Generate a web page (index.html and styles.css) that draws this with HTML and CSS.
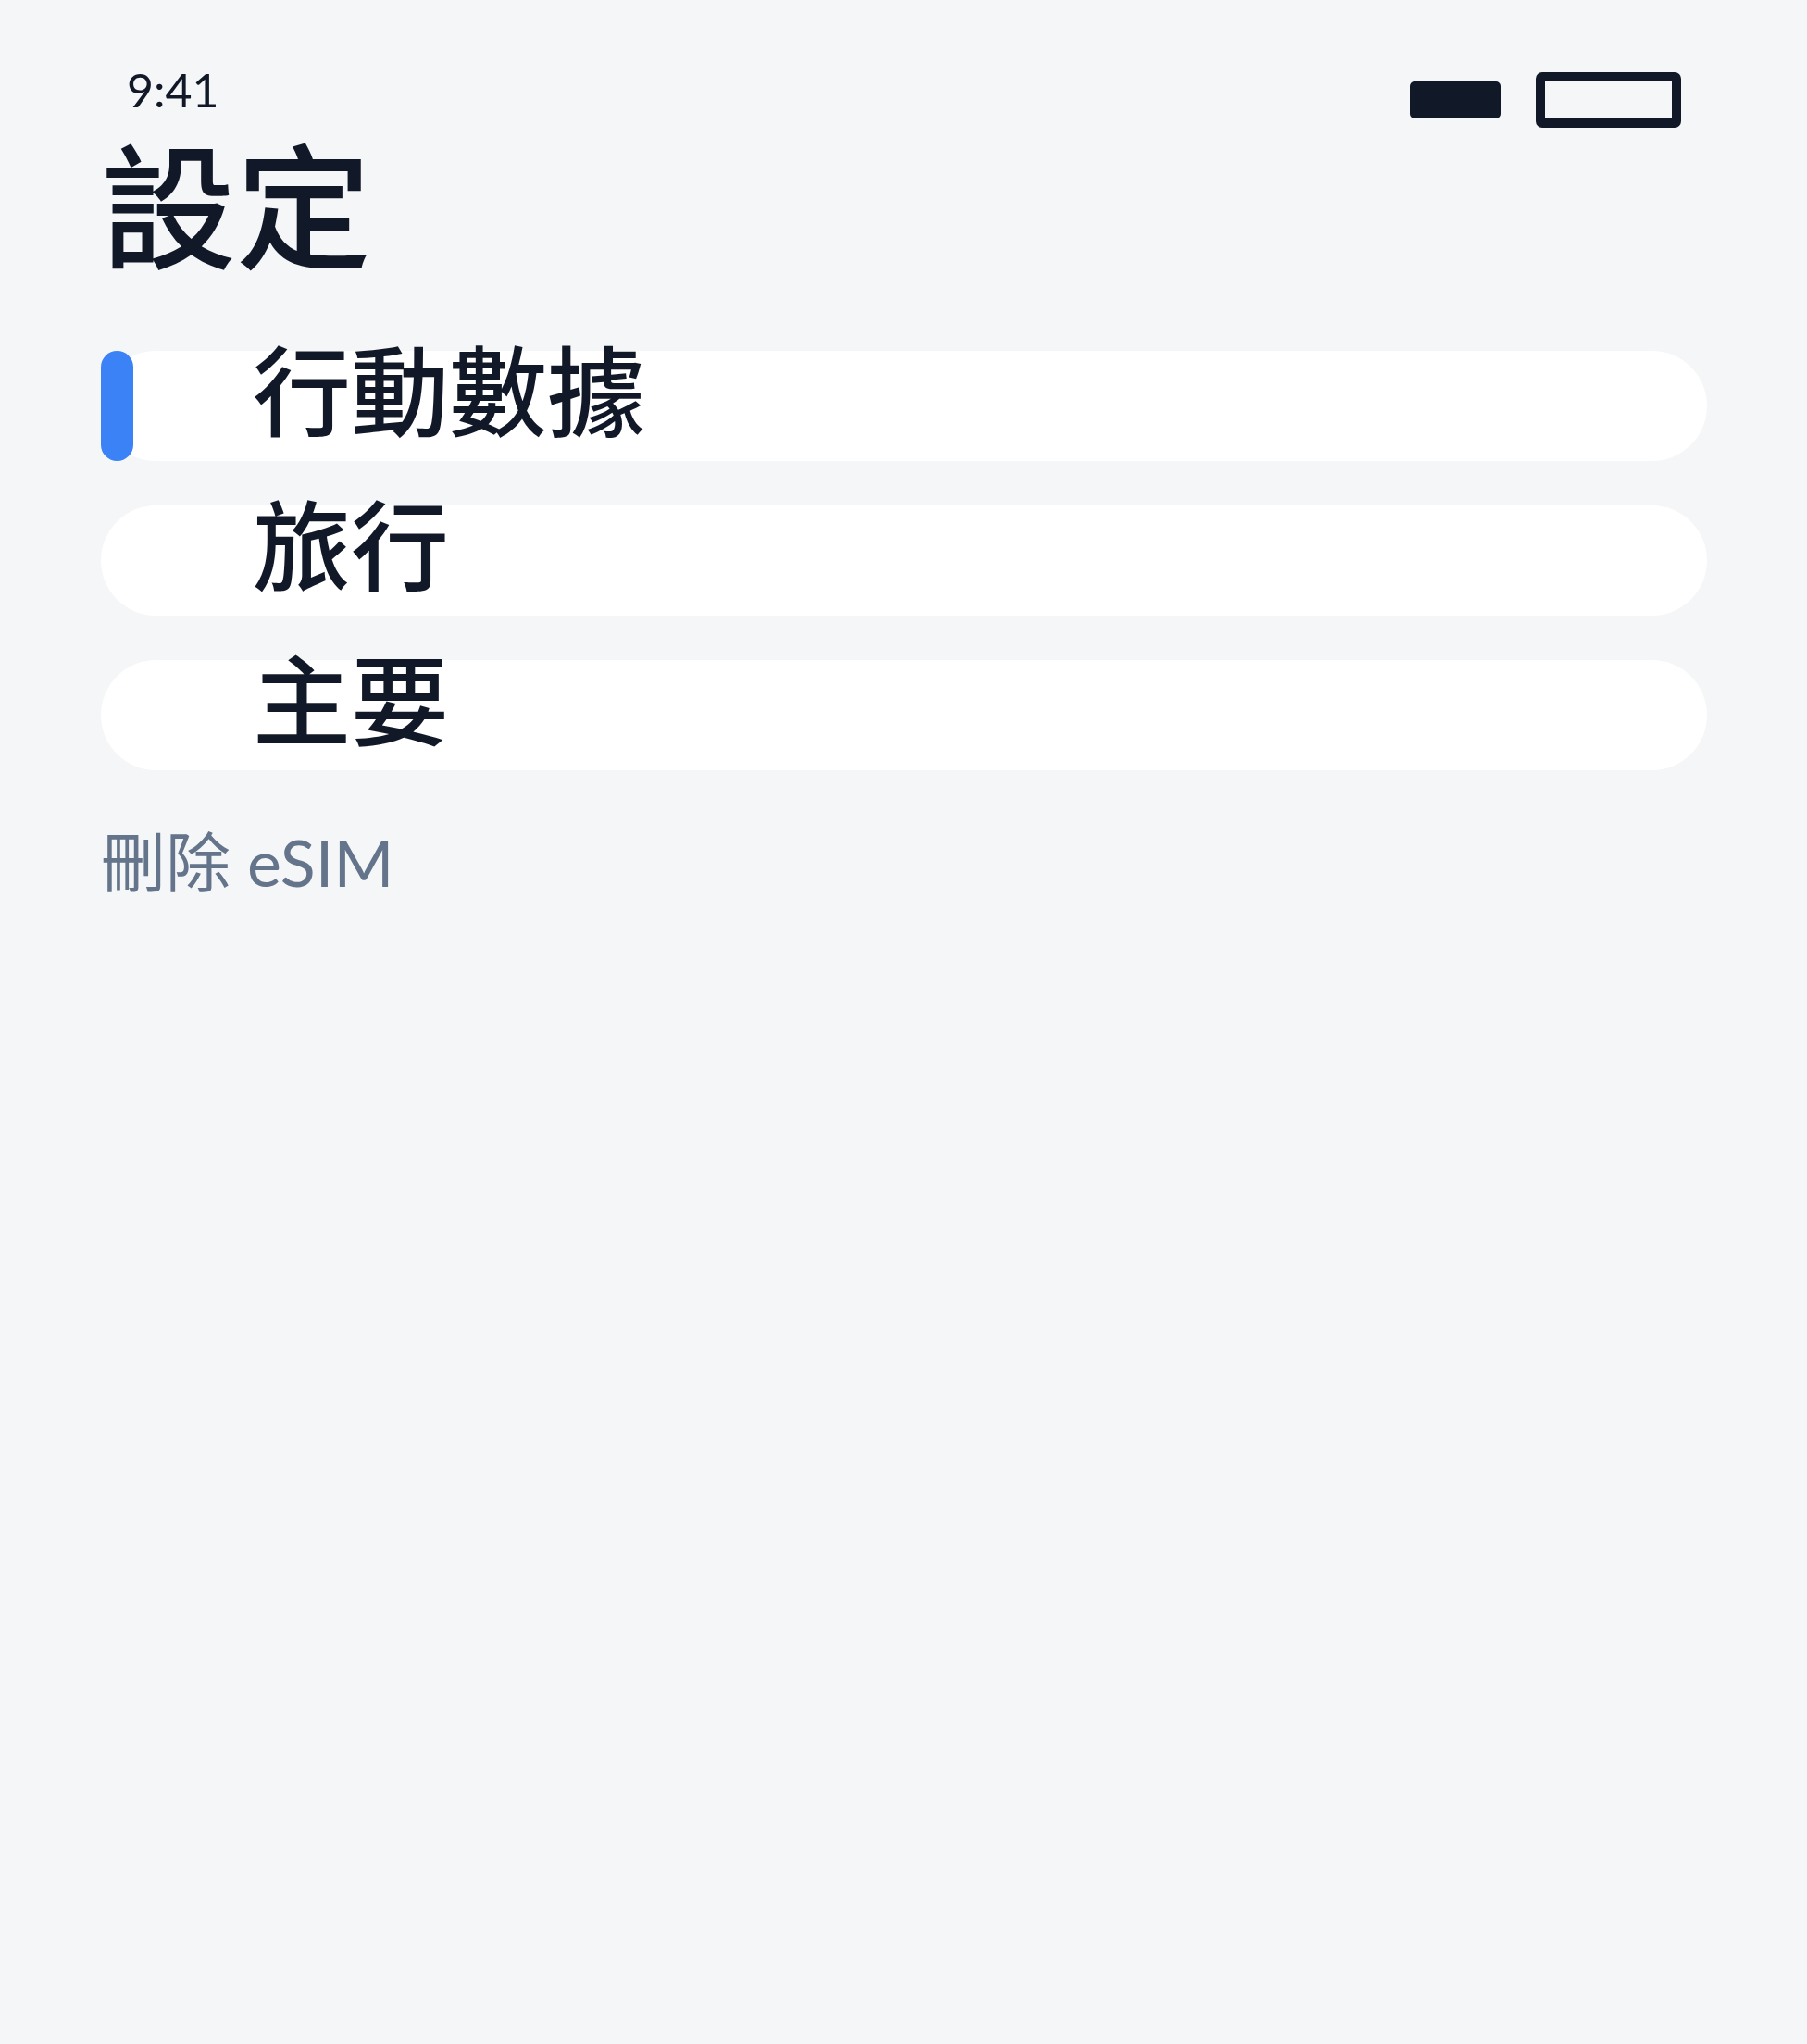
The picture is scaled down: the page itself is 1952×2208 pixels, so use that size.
FILE: index.html
```html
<!DOCTYPE html>
<html lang="zh-Hant">

<head>
    <meta charset="UTF-8">
    <meta name="viewport" content="width=device-width, initial-scale=1.0">
    <title>設定</title>
    <link rel="stylesheet" href="styles.css">
</head>

<body>
    <div class="screen">
        <div class="status-bar">
            <span class="time">9:41</span>
            <div class="status-icons">
                <span class="signal"></span>
                <span class="battery"></span>
            </div>
        </div>

        <h1 class="title">設定</h1>

        <ul class="menu">
            <li class="menu-item active"><span class="menu-text">行動數據</span></li>
            <li class="menu-item"><span class="menu-text">旅行</span></li>
            <li class="menu-item"><span class="menu-text">主要</span></li>
        </ul>

        <div class="delete-esim">刪除 eSIM</div>
    </div>
</body>

</html>
```

FILE: styles.css
```css
* {
    margin: 0;
    padding: 0;
    box-sizing: border-box;
}

li {
    list-style: none;
}

body {
    background-color: #f5f6f8;
    color: #111827;
    font-family: Lato, "Noto Sans CJK TC", sans-serif;
}

.screen {
    min-height: 2208px;
    padding: 0 108px 0 109px;
}

/* 狀態列 */
.status-bar {
    display: flex;
    justify-content: space-between;
    align-items: flex-start;
    padding: 72px 28px 0;
}

.time {
    font-size: 50px;
    line-height: 50px;
    font-weight: 400;
}

.status-icons {
    display: flex;
    align-items: center;
    gap: 38px;
    margin-top: 6px;
}

.signal {
    width: 98px;
    height: 40px;
    background-color: #111827;
    border-radius: 5px;
}

.battery {
    width: 157px;
    height: 60px;
    border: 10px solid #111827;
    border-radius: 7px;
}

.title {
    margin-top: 5px;
    font-family: "Noto Sans CJK TC", sans-serif;
    font-size: 146px;
    line-height: 1;
    font-weight: 500;
}

/* 清單 */
.menu {
    display: flex;
    flex-direction: column;
    gap: 48px;
    margin-top: 90px;
}

.menu-item {
    position: relative;
    display: flex;
    align-items: flex-start;
    height: 119px;
    padding-left: 164px;
    background-color: #fff;
    border-radius: 60px;
}

.menu-item.active::before {
    content: "";
    position: absolute;
    left: 0;
    top: 0;
    bottom: 0;
    width: 35px;
    border-radius: 18px;
    background-color: #3b82f6;
}

.menu-text {
    font-family: "Noto Sans CJK TC", sans-serif;
    font-size: 106px;
    line-height: 76px;
    font-weight: 500;
}

.delete-esim {
    margin-top: 64px;
    font-size: 70px;
    line-height: 1;
    color: #64748b;
}
```
